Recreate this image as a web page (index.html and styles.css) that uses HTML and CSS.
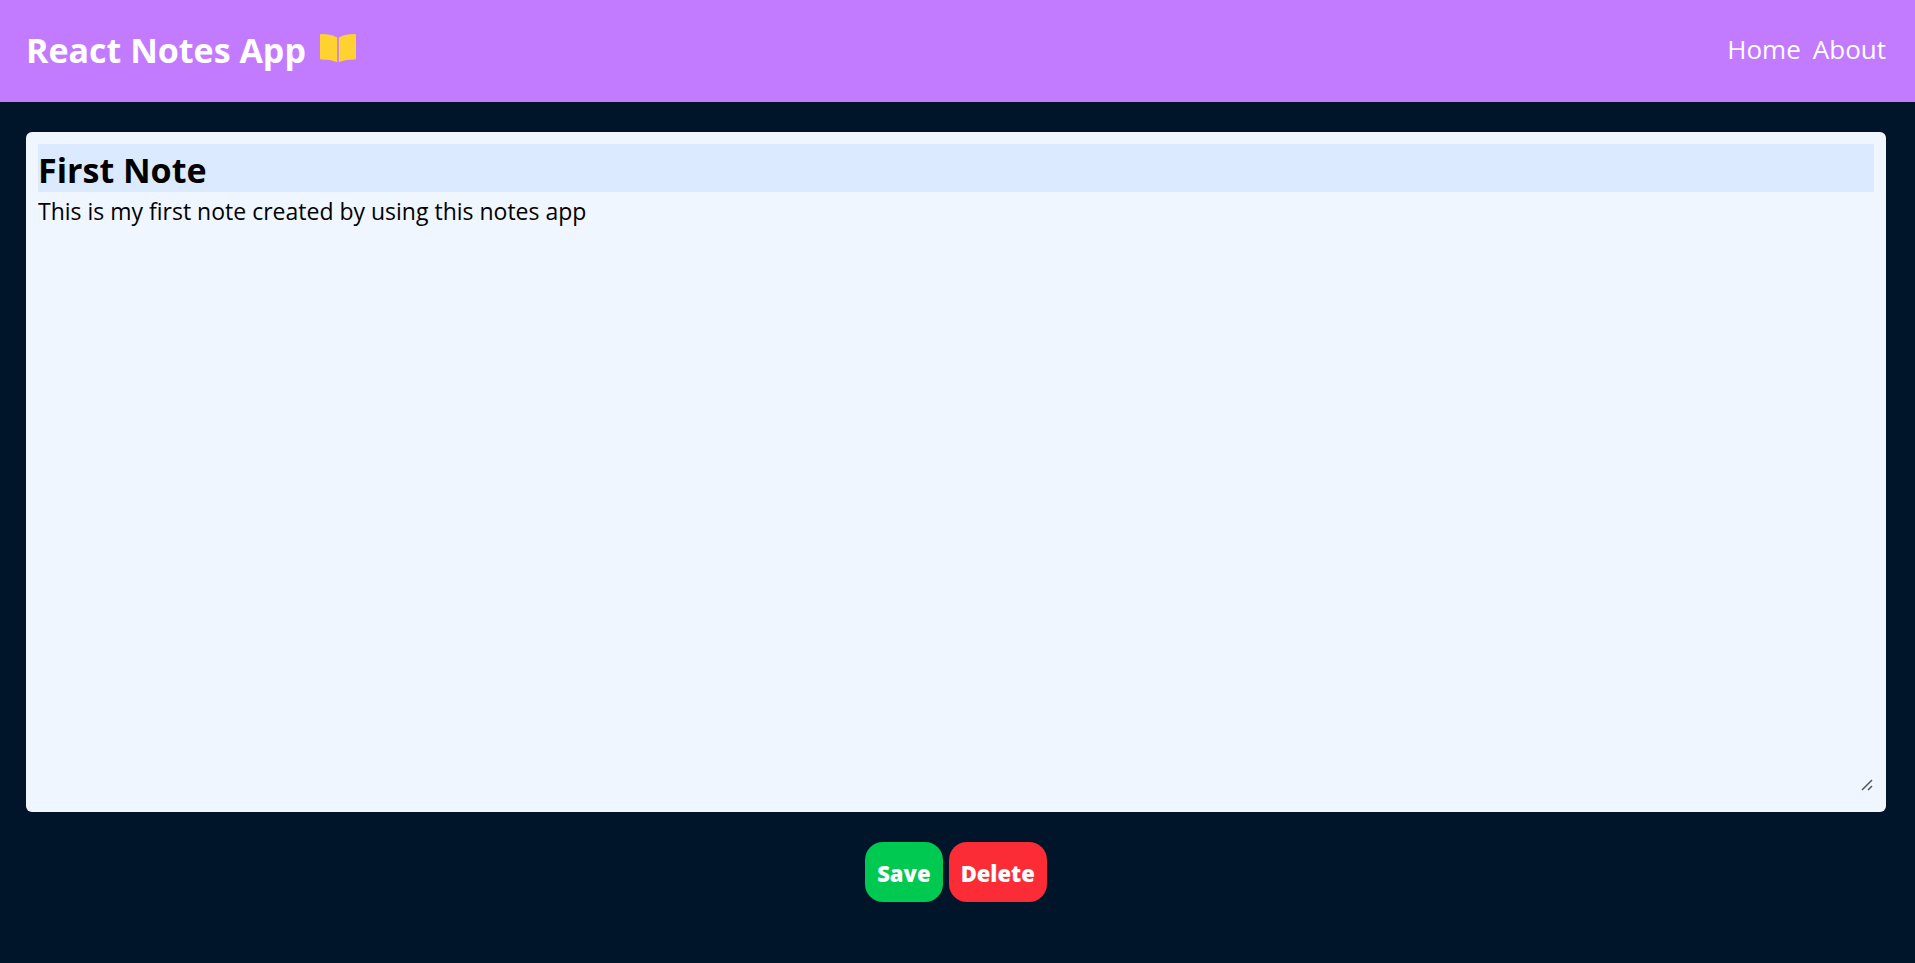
FILE: index.html
```html
<!DOCTYPE html>
<html lang="en">
<head>
  <meta charset="utf-8">
  <title>React Notes App</title>
  <link rel="stylesheet" href="styles.css">
</head>
<body>
  <header class="header">
    <h1 class="brand">React Notes App
      <svg class="brand-icon" viewBox="0 0 36 29" aria-hidden="true">
        <path d="M0 1.3Q0 0 1.5 0C7 0 12.500 1 17.200 3.400V28.300C12.500 26.200 7 25.500 1.500 25.500Q0 25.500 0 24.200Z"/>
        <path d="M36 1.300Q36 0 34.500 0C29 0 23.500 1 18.800 3.400V28.300C23.500 26.200 29 25.500 34.500 25.500Q36 25.500 36 24.200Z"/>
      </svg>
    </h1>
    <nav class="nav">
      <a href="#home">Home</a>
      <a href="#about">About</a>
    </nav>
  </header>
  <main class="main">
    <form class="note-form">
      <div class="note">
        <input class="note-title" type="text" value="First Note" aria-label="Note title">
        <div class="note-field">
          <textarea class="note-body" aria-label="Note text" spellcheck="false">This is my first note created by using this notes app</textarea>
          <svg class="grip" viewBox="0 0 12 12" aria-hidden="true">
            <path d="M1 11L11 1M7 11L11 7"/>
          </svg>
        </div>
      </div>
      <div class="actions">
        <button class="button button-save" type="button">Save</button>
        <button class="button button-delete" type="button">Delete</button>
      </div>
    </form>
  </main>
</body>
</html>
```
FILE: styles.css
```css
* {
  box-sizing: border-box;
  margin: 0;
  padding: 0;
}

body {
  min-height: 100vh;
  background: #001529;
  font-family: "Segoe UI", "Open Sans", "Noto Sans", sans-serif;
  font-size: 23px;
  line-height: 36px;
}

.header {
  display: flex;
  align-items: center;
  justify-content: space-between;
  padding: 24px 29px 24px 26px;
  background: #c27aff;
  color: #fff;
}

.brand {
  display: flex;
  align-items: center;
  gap: 14px;
  padding-bottom: 2px;
  font-size: 34px;
  font-weight: 700;
  line-height: 52px;
}

.brand-icon {
  width: 36px;
  height: 29px;
  margin-bottom: 4px;
  fill: #ffd230;
}

.nav {
  display: flex;
  gap: 12px;
  padding-bottom: 4px;
  font-size: 26px;
}

.nav a {
  color: inherit;
  text-decoration: none;
}

.main {
  padding: 30px 29px 60px 26px;
}

.note {
  display: flex;
  flex-direction: column;
  padding: 12px 12px 20px;
  border-radius: 6px;
  background: #eff6ff;
}

.note-title,
.note-body {
  display: block;
  width: 100%;
  border: 0;
  outline: 0;
  color: #000;
  font-family: inherit;
}

.note-title {
  height: 48px;
  padding-top: 4px;
  background: #dbeafe;
  font-size: 34px;
  font-weight: 700;
}

.note-field {
  position: relative;
}

.note-body {
  height: 600px;
  padding-top: 1px;
  background: transparent;
  font-size: 23px;
  line-height: 36px;
  resize: vertical;
}

.note-body::-webkit-resizer {
  background: transparent;
}

.grip {
  position: absolute;
  right: 1px;
  bottom: 1px;
  width: 12px;
  height: 12px;
  stroke: #555;
  stroke-width: 1.5;
  pointer-events: none;
}

.actions {
  display: flex;
  justify-content: center;
  gap: 6px;
  padding-top: 30px;
}

.button {
  padding: 13px 12px 11px;
  border: 0;
  border-radius: 18px;
  color: #fff;
  font-family: inherit;
  font-size: 22px;
  font-weight: 800;
  line-height: 36px;
}

.button-save {
  background: #00c951;
}

.button-delete {
  background: #fb2c36;
}
```
